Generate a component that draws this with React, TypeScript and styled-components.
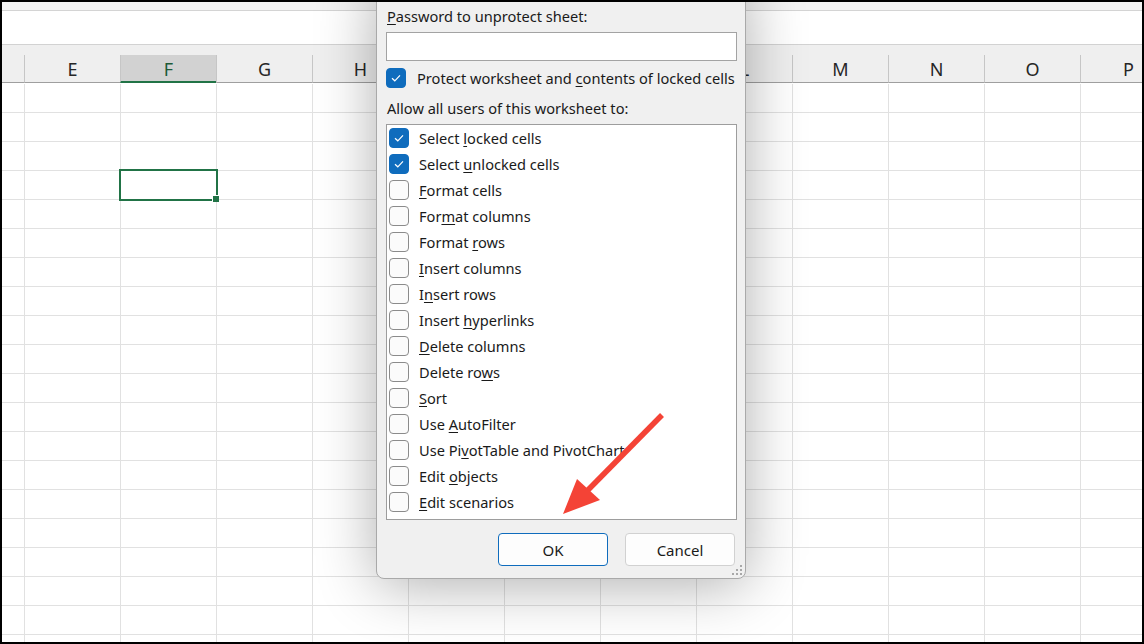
import React from "react";
import styled, { createGlobalStyle } from "styled-components";

const GlobalStyle = createGlobalStyle`
  html, body {
    margin: 0;
    padding: 0;
    background: #000;
  }
  * {
    box-sizing: border-box;
  }
`;

const Frame = styled.div`
  position: relative;
  width: 1144px;
  height: 644px;
  border: 2px solid #000;
  background: #fff;
  overflow: hidden;
  display: flex;
  flex-direction: column;
  font-family: "Noto Sans", "Open Sans", sans-serif;
  & > * {
    flex: none;
  }
`;

const RibbonEdge = styled.div`
  height: 9px;
  background: #f3f3f3;
  border-bottom: 1px solid #d4d4d4;
`;

const FormulaBar = styled.div`
  height: 34px;
  background: #fff;
  border-bottom: 1px solid #d2d2d2;
`;

const HeaderGap = styled.div`
  height: 10px;
  background: #efefef;
`;

const Sheet = styled.div`
  display: grid;
  grid-template-columns: 22px repeat(12, 96px);
  grid-auto-rows: 29px;
`;

const HeaderCell = styled.div<{ $active?: boolean; $first?: boolean }>`
  height: 28px;
  display: flex;
  align-items: center;
  justify-content: center;
  padding-top: 1px;
  font-size: 18px;
  color: ${(p) => (p.$active ? "#1d5a37" : "#262626")};
  background: ${(p) => (p.$active ? "#d2d2d2" : "#efefef")};
  border-left: ${(p) => (p.$first ? "none" : "1px solid #c6c6c6")};
  border-bottom: ${(p) => (p.$active ? "2px solid #217346" : "1px solid #9f9f9f")};
`;

const Cell = styled.div<{ $first?: boolean }>`
  position: relative;
  border-left: ${(p) => (p.$first ? "none" : "1px solid #e1e1e1")};
  border-bottom: 1px solid #e1e1e1;
`;

const Selection = styled.div`
  position: absolute;
  z-index: 2;
  left: -2px;
  top: -2px;
  right: -2px;
  bottom: -2px;
  border: 2px solid #217346;
`;

const FillHandle = styled.div`
  position: absolute;
  right: -3px;
  bottom: -3px;
  width: 6px;
  height: 6px;
  background: #217346;
  border-left: 1px solid #fff;
  border-top: 1px solid #fff;
  box-sizing: content-box;
`;

const Dialog = styled.div`
  position: absolute;
  z-index: 5;
  left: 374px;
  top: -27px;
  width: 370px;
  padding: 30px 8px 12px 9px;
  background: #f0f0f0;
  border: 1px solid #a9a9a9;
  border-radius: 0 0 8px 8px;
  box-shadow: 0 6px 60px rgba(0, 0, 0, 0.32);
  display: flex;
  flex-direction: column;
  color: #1a1a1a;
  font-size: 14.6px;
`;

const Label = styled.div`
  height: 20px;
  line-height: 20px;
  padding-left: 1px;
  white-space: nowrap;
`;

const Mn = styled.u`
  text-decoration: underline;
  text-decoration-thickness: 1px;
  text-underline-offset: 2px;
`;

const PasswordInput = styled.div`
  margin-top: 6px;
  height: 29px;
  background: #fff;
  border: 1px solid #a3a3a3;
`;

const CheckRow = styled.div<{ $gap: number }>`
  display: flex;
  align-items: center;
  gap: ${(p) => p.$gap}px;
  height: 26px;
  white-space: nowrap;
`;

const ProtectRow = styled(CheckRow)`
  margin-top: 4px;
`;

const AllowLabel = styled(Label)`
  margin-top: 7px;
`;

const ListBox = styled.div`
  margin-top: 6px;
  height: 396px;
  background: #fff;
  border: 1px solid #9d9d9d;
  padding: 0 0 0 2px;
  display: flex;
  flex-direction: column;
`;

const Box = styled.span<{ $checked?: boolean }>`
  flex: none;
  width: 20px;
  height: 20px;
  border-radius: 4px;
  display: flex;
  align-items: center;
  justify-content: center;
  background: ${(p) => (p.$checked ? "#0f6cbd" : "#fbfbfb")};
  border: 1px solid ${(p) => (p.$checked ? "#0f6cbd" : "#8b8b8b")};
`;

const ButtonRow = styled.div`
  margin-top: 13px;
  padding-right: 2px;
  display: flex;
  justify-content: flex-end;
  gap: 17px;
`;

const Button = styled.div<{ $primary?: boolean }>`
  width: 110px;
  height: 33px;
  border-radius: 4px;
  background: #fdfdfd;
  border: 1px solid ${(p) => (p.$primary ? "#0f6cbd" : "#d1d1d1")};
  display: flex;
  align-items: center;
  justify-content: center;
  font-size: 15px;
  color: #1a1a1a;
`;

const Grip = styled.svg`
  position: absolute;
  right: 1px;
  bottom: 1px;
`;

const Arrow = styled.svg`
  position: absolute;
  z-index: 6;
  left: 0;
  top: 0;
  pointer-events: none;
`;

// I, J and K sit fully under the dialog, so their labels are left empty
const columns = ["", "E", "F", "G", "H", "", "", "", "L", "M", "N", "O", "P"];

type Item = { pre: string; key: string; post: string; checked?: boolean };

const items: Item[] = [
  { pre: "Select ", key: "l", post: "ocked cells", checked: true },
  { pre: "Select ", key: "u", post: "nlocked cells", checked: true },
  { pre: "", key: "F", post: "ormat cells" },
  { pre: "For", key: "m", post: "at columns" },
  { pre: "Format ", key: "r", post: "ows" },
  { pre: "", key: "I", post: "nsert columns" },
  { pre: "I", key: "n", post: "sert rows" },
  { pre: "Insert ", key: "h", post: "yperlinks" },
  { pre: "", key: "D", post: "elete columns" },
  { pre: "Delete ro", key: "w", post: "s" },
  { pre: "", key: "S", post: "ort" },
  { pre: "Use ", key: "A", post: "utoFilter" },
  { pre: "Use Pi", key: "v", post: "otTable and PivotChart" },
  { pre: "Edit ", key: "o", post: "bjects" },
  { pre: "", key: "E", post: "dit scenarios" },
];

function Check({ checked }: { checked?: boolean }) {
  return (
    <Box $checked={checked}>
      {checked && (
        <svg width="12" height="10" viewBox="0 0 12 10">
          <path d="M2 5.2 L4.8 7.8 L10 2.4" fill="none" stroke="#fff" strokeWidth="1.2" />
        </svg>
      )}
    </Box>
  );
}

export default function App() {
  const rows = Array.from({ length: 20 }, (_, i) => i);
  return (
    <>
      <GlobalStyle />
      <Frame>
        <RibbonEdge />
        <FormulaBar />
        <HeaderGap />
        <Sheet>
          {columns.map((c, i) => (
            <HeaderCell key={"h" + i} $first={i === 0} $active={c === "F"}>
              {c}
            </HeaderCell>
          ))}
          {rows.map((r) =>
            columns.map((c, i) => (
              <Cell key={r + "-" + i} $first={i === 0}>
                {r === 3 && c === "F" && (
                  <Selection>
                    <FillHandle />
                  </Selection>
                )}
              </Cell>
            ))
          )}
        </Sheet>

        <Dialog>
          <Label>
            <Mn>P</Mn>assword to unprotect sheet:
          </Label>
          <PasswordInput />
          <ProtectRow $gap={11}>
            <Check checked />
            <span>
              Protect worksheet and <Mn>c</Mn>ontents of locked cells
            </span>
          </ProtectRow>
          <AllowLabel>Allow all users of this worksheet to:</AllowLabel>
          <ListBox>
            {items.map((it) => (
              <CheckRow key={it.pre + it.key + it.post} $gap={10}>
                <Check checked={it.checked} />
                <span>
                  {it.pre}
                  <Mn>{it.key}</Mn>
                  {it.post}
                </span>
              </CheckRow>
            ))}
          </ListBox>
          <ButtonRow>
            <Button $primary>OK</Button>
            <Button>Cancel</Button>
          </ButtonRow>
          <Grip width="12" height="12" viewBox="0 0 12 12">
            <g fill="#a8a8a8">
              <rect x="8" y="0" width="2" height="2" />
              <rect x="4" y="4" width="2" height="2" />
              <rect x="8" y="4" width="2" height="2" />
              <rect x="0" y="8" width="2" height="2" />
              <rect x="4" y="8" width="2" height="2" />
              <rect x="8" y="8" width="2" height="2" />
            </g>
          </Grip>
        </Dialog>

        <Arrow width="1140" height="640" viewBox="0 0 1140 640">
          <line x1="660" y1="413" x2="586" y2="488" stroke="#f44336" strokeWidth="5.5" strokeLinecap="butt" />
          <polygon points="561,512 575,477 598,498" fill="#f44336" />
        </Arrow>
      </Frame>
    </>
  );
}
